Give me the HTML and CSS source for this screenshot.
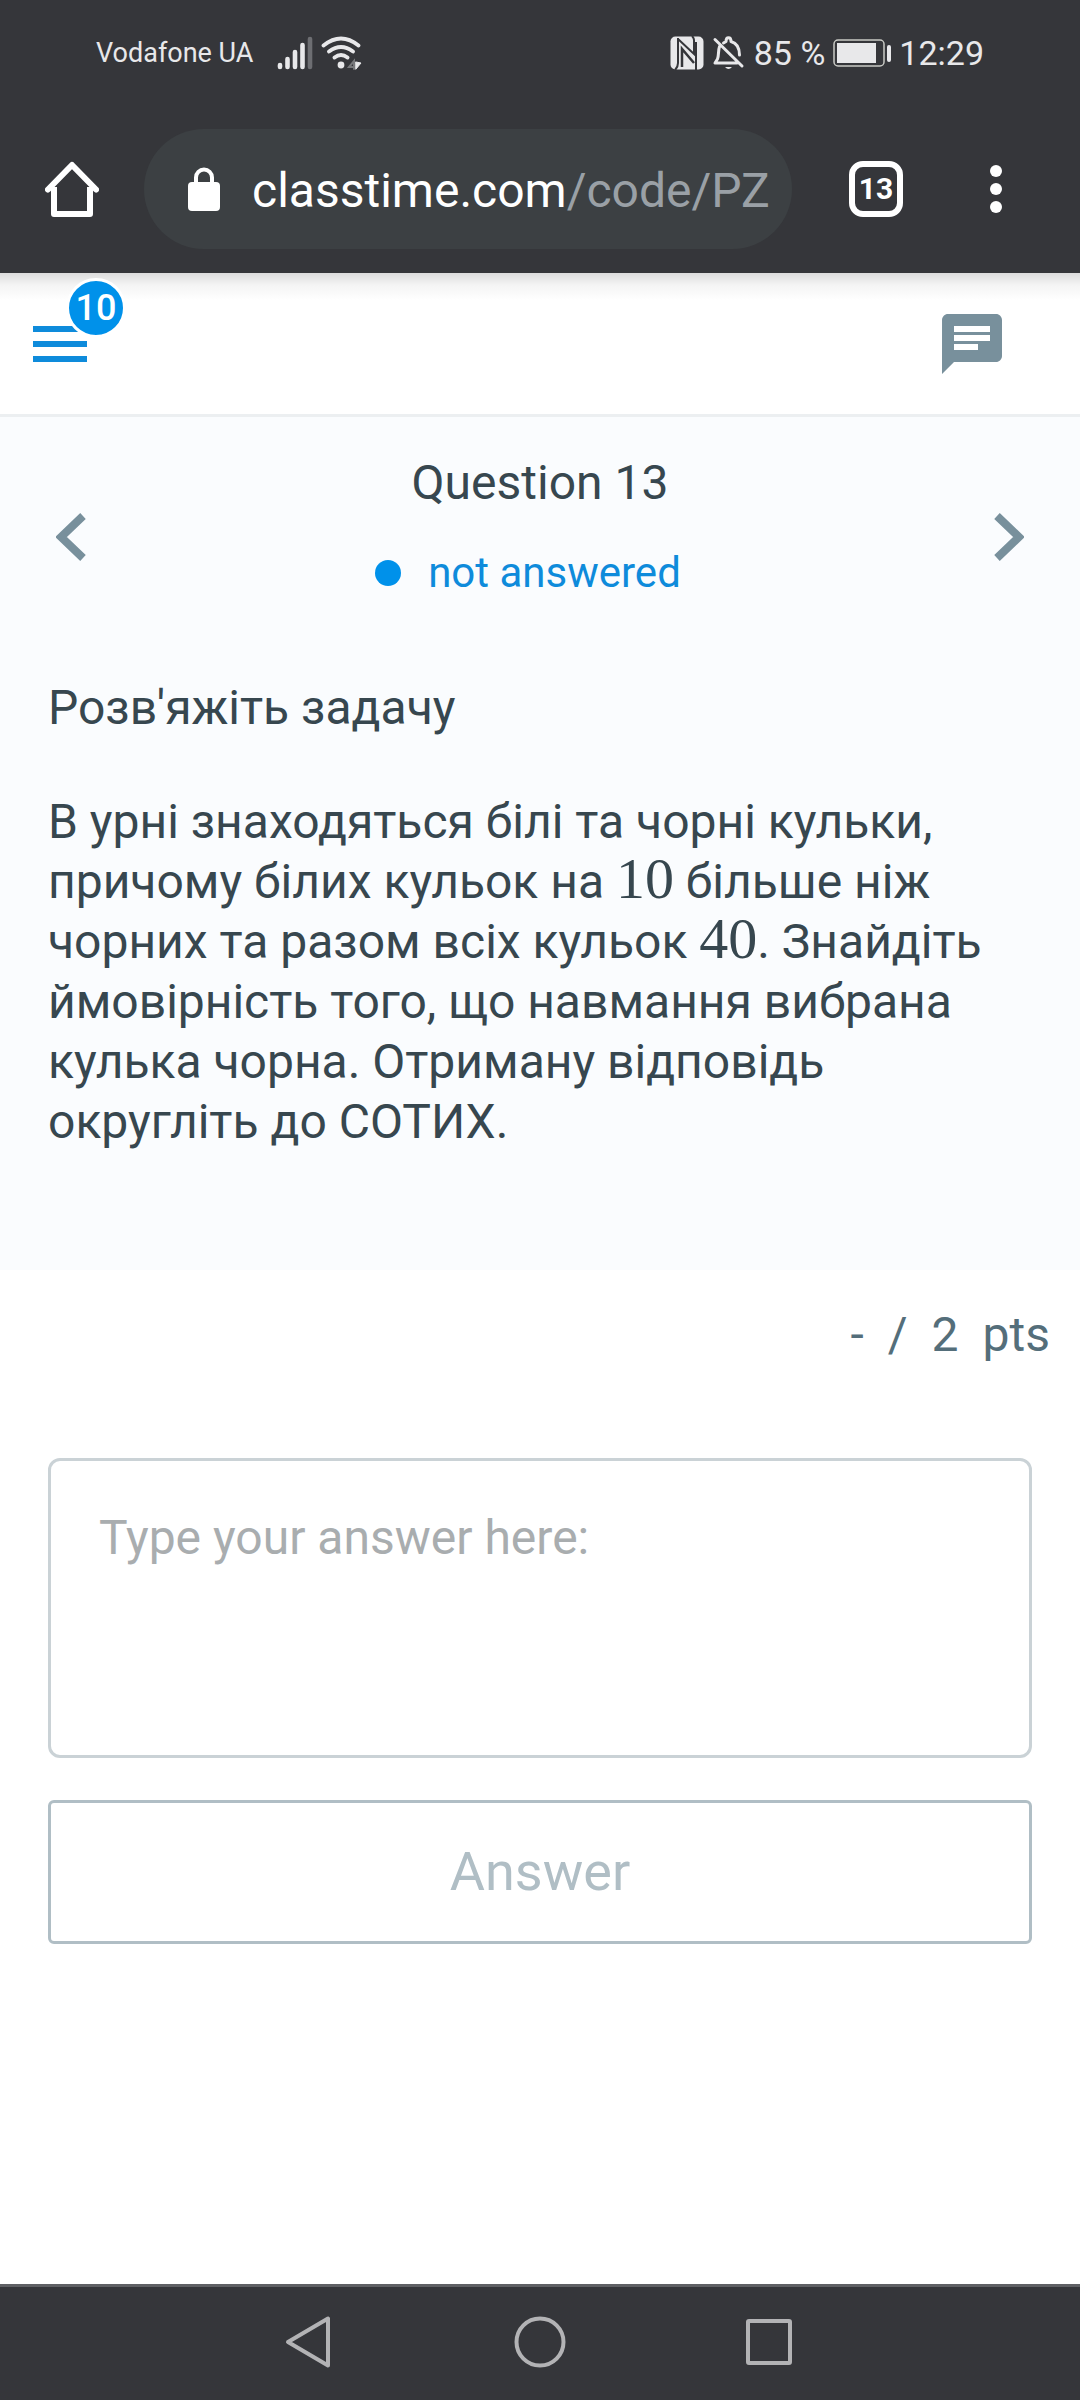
FILE: index.html
```html
<!DOCTYPE html>
<html lang="uk">
<head>
<meta charset="utf-8">
<meta name="viewport" content="width=device-width">
<title>Classtime – Question 13</title>
<link rel="stylesheet" href="styles.css">
</head>
<body>
<div class="screen">
  <div class="status-bar">
    <div class="status-group">
      <span class="carrier">Vodafone UA</span>
      <div class="radio-icons">
        <svg width="36" height="34" viewBox="0 0 36 34" stroke-width="4.6" stroke-linecap="round" stroke="#e8e8ea" aria-hidden="true">
          <path d="M3 29v2M10.500 23v8M18 16v15M25.500 9v22"/><path d="M33 3v28" stroke="#6d6e72"/>
        </svg>
        <svg width="42" height="34" viewBox="0 0 42 34" fill="none" stroke="#e8e8ea" stroke-width="3.800" stroke-linecap="round" aria-hidden="true">
          <path d="M2.500 9.500Q20 -4.500 37.500 9.500M8 15.500Q20 6.500 32 15.500M13.500 21.500Q20 16.500 26.500 21.500"/>
          <circle cx="20" cy="29" r="3.400" fill="#e8e8ea" stroke="none"/>
          <path d="M33 33V25l-5 6h6" stroke="#77787b" stroke-width="2"/>
          <path d="M35 26l5 1-5 6z" fill="#e8e8ea" stroke-width="1"/>
        </svg>
      </div>
    </div>
    <div class="status-group status-right">
      <svg width="34" height="34" viewBox="0 0 34 34" aria-hidden="true">
        <rect x="0.500" y="0.500" width="33" height="33" rx="5" fill="#e8e8ea"/>
        <path d="M8 2v25q0 4-3 7M8 3l16 15V4q0-2-2-4M26 34V6" fill="none" stroke="#35363a" stroke-width="2"/>
        <path d="M12 31V13l12 14" fill="none" stroke="#35363a" stroke-width="2.500"/>
      </svg>
      <svg width="34" height="34" viewBox="0 0 34 34" fill="none" stroke="#e8e8ea" stroke-width="3" stroke-linecap="round" stroke-linejoin="round" aria-hidden="true">
        <path d="M3 3.500l27 26.500M7.500 10.500c-1.500 4-.5 9-2 12.500L3 27h22M11.500 7l2.500-1.500c0-5 5-5 5 0 7 2 8.500 7 8.500 13.500"/>
        <path d="M13 31h7q-3.500 4-7 0z" fill="#e8e8ea" stroke="none"/>
      </svg>
      <span class="battery-level">85 %</span>
      <svg width="58" height="30" viewBox="0 0 58 30" aria-hidden="true">
        <rect x="1" y="2" width="50" height="26" rx="4" fill="none" stroke="#c9cac5" stroke-width="1.500"/>
        <rect x="4" y="5" width="39" height="20" fill="#e8e8ea"/>
        <rect x="54" y="7" width="4" height="17" rx="2" fill="#e8e8ea"/>
      </svg>
      <span class="clock">12:29</span>
    </div>
  </div>

  <div class="browser-bar">
    <button class="bar-button home-button" type="button" aria-label="Home">
      <svg width="54" height="56" viewBox="0 0 54 56" fill="none" stroke="#fff" stroke-width="6" stroke-linecap="round" stroke-linejoin="round">
        <path d="M3 28.500L27 4l24 24.500"/><path d="M9 26v27h36V26" stroke-linecap="butt"/>
      </svg>
    </button>
    <button class="address" type="button" aria-label="Address">
      <svg width="32" height="44" viewBox="0 0 32 44">
        <rect x="0" y="15" width="32" height="29" rx="4" fill="#fff"/>
        <path d="M8 17V10.500a8 8 0 0 1 16 0V17" fill="none" stroke="#fff" stroke-width="4"/>
      </svg>
      <span class="url">classtime.com<span class="url-path">/code/PZ</span></span>
    </button>
    <button class="bar-button" type="button" aria-label="Tabs"><span class="tab-count">13</span></button>
    <button class="bar-button" type="button" aria-label="More">
      <svg width="12" height="48" viewBox="0 0 12 48" fill="#fff"><circle cx="6" cy="6" r="6"/><circle cx="6" cy="24" r="6"/><circle cx="6" cy="42" r="6"/></svg>
    </button>
  </div>

  <header class="app-header">
    <button class="menu-button" type="button" aria-label="Menu">
      <svg width="54" height="36" viewBox="0 0 54 36" fill="#0e8bdb"><path d="M0 0h54v6H0zM0 15h54v6H0zM0 30h54v6H0z"/></svg>
      <span class="badge">10</span>
    </button>
    <button class="chat-button" type="button" aria-label="Messages">
      <svg width="72" height="72" viewBox="0 0 24 24" fill="#78909c"><path d="M20 2H4c-1.100 0-1.990.9-1.990 2L2 22l4-4h14c1.100 0 2-.9 2-2V4c0-1.100-.9-2-2-2zM6 6h12v2H6V6zm8 8H6v-2h8v2zm4-3H6V9h12v2z"/></svg>
    </button>
  </header>

  <main class="content">
    <section class="question">
      <div class="question-nav">
        <button class="step" type="button" aria-label="Previous question">
          <svg width="30" height="48" viewBox="0 0 30 48" fill="none" stroke="#78909c" stroke-width="8"><path d="M27 3L5 24l22 21"/></svg>
        </button>
        <div class="question-title">
          <h1>Question 13</h1>
          <p class="state"><span class="dot"></span>not answered</p>
        </div>
        <button class="step" type="button" aria-label="Next question">
          <svg width="30" height="48" viewBox="0 0 30 48" fill="none" stroke="#78909c" stroke-width="8"><path d="M3 3l22 21L3 45"/></svg>
        </button>
      </div>
      <div class="task">
        <h2>Розв'яжіть задачу</h2>
        <p>В урні знаходяться білі та чорні кульки, причому білих кульок на <span class="math">10</span> більше ніж чорних та разом всіх кульок <span class="math">40</span>. Знайдіть ймовірність того, що навмання вибрана кулька чорна. Отриману відповідь округліть до СОТИХ.</p>
      </div>
    </section>
    <p class="points"><span>-</span><span>/</span><span>2</span><span>pts</span></p>
    <form class="answer-form">
      <textarea class="answer-input" aria-label="Answer text" placeholder="Type your answer here:"></textarea>
      <button class="answer-button" type="button">Answer</button>
    </form>
  </main>

  <nav class="system-nav">
    <button type="button" aria-label="Back"><svg width="54" height="54" viewBox="0 0 54 54"><path d="M4 27L44 3.500v47z"/></svg></button>
    <button type="button" aria-label="Home screen"><svg width="54" height="54" viewBox="0 0 54 54"><circle cx="27" cy="27" r="23.500"/></svg></button>
    <button type="button" aria-label="Recent apps"><svg width="54" height="54" viewBox="0 0 54 54"><rect x="6" y="6" width="42" height="42" rx="1"/></svg></button>
  </nav>
</div>
</body>
</html>
```
FILE: styles.css
```css
* { box-sizing: border-box; }
body, h1, h2, p { margin: 0; }
body {
  font-family: Roboto, "Liberation Sans", sans-serif;
  font-size: 48px;
  line-height: 60px;
  color: #37474f;
  background: #fff;
}
h1, h2 { font-size: 48px; font-weight: 400; }
button {
  padding: 0;
  border: 0;
  background: none;
  font: inherit;
  color: inherit;
}
svg { display: block; flex: none; }

.screen {
  display: flex;
  flex-direction: column;
  min-height: 100vh;
}

/* Phone status bar */
.status-bar {
  display: flex;
  justify-content: space-between;
  align-items: center;
  height: 105px;
  padding: 0 96px;
  background: #35363a;
  color: #e8e8ea;
  font-size: 34px;
}
.status-group { display: flex; align-items: center; gap: 24px; }
.status-right { gap: 8px; }
.carrier { font-size: 27px; }
.radio-icons { display: flex; gap: 8px; }

/* Browser toolbar */
.browser-bar {
  display: flex;
  align-items: center;
  height: 168px;
  padding-right: 24px;
  background: #35363a;
  color: #fff;
}
.bar-button {
  display: flex;
  justify-content: center;
  align-items: center;
  width: 120px;
  height: 120px;
}
.home-button { width: 144px; }
.address {
  display: flex;
  flex: 1;
  align-items: center;
  gap: 32px;
  min-width: 0;
  height: 120px;
  margin-right: 24px;
  padding: 0 16px 0 44px;
  border-radius: 60px;
  background: #3c4043;
}
.url { padding-top: 3px; white-space: nowrap; }
.url-path { color: #9aa0a6; }
.tab-count {
  width: 54px;
  height: 56px;
  border: 6px solid #fff;
  border-radius: 14px;
  font-size: 30px;
  font-weight: 700;
  line-height: 44px;
  text-align: center;
}

/* App header */
.app-header {
  display: flex;
  justify-content: space-between;
  align-items: center;
  height: 144px;
  padding: 0 72px 0 33px;
  border-bottom: 3px solid #eceff1;
  background: linear-gradient(#dcdcdc, #f4f4f4 12px, #fff 27px);
}
.menu-button { position: relative; }
.badge {
  position: absolute;
  left: 33px;
  bottom: 24px;
  width: 60px;
  height: 60px;
  border: 3px solid #fff;
  border-radius: 50%;
  background: #0091ea;
  color: #fff;
  font-size: 36px;
  font-weight: 500;
  line-height: 54px;
}

/* Question */
.content { flex: 1; }
.question {
  padding: 36px 48px 118px;
  background: #fafcfe;
}
.question-nav {
  display: flex;
  justify-content: space-between;
  align-items: center;
  padding: 0 8px;
}
.question-title {
  display: flex;
  flex-direction: column;
  align-items: center;
  gap: 30px;
  padding-bottom: 18px;
}
.state {
  display: flex;
  align-items: center;
  gap: 27px;
  padding-right: 24px;
  color: #0e8bdb;
  font-size: 42px;
}
.dot {
  width: 26px;
  height: 26px;
  border-radius: 50%;
  background: #0091ea;
}
.task {
  display: flex;
  flex-direction: column;
  gap: 54px;
  padding-top: 57px;
}
.math {
  font-family: "Liberation Serif", serif;
  font-size: 58px;
  line-height: 48px;
}

/* Answer */
.points {
  display: flex;
  justify-content: flex-end;
  gap: 24px;
  padding: 35px 30px 0;
  color: #546e7a;
}
.answer-form {
  display: flex;
  flex-direction: column;
  gap: 42px;
  padding: 93px 48px 48px;
}
.answer-input {
  display: block;
  height: 300px;
  padding: 47px 48px;
  border: 3px solid #cad2d6;
  border-radius: 12px;
  background: #fff;
  color: #37474f;
  font: inherit;
  resize: none;
}
.answer-input::placeholder { color: #a9adaf; opacity: 1; }
.answer-button {
  height: 144px;
  border: 3px solid #b0bec5;
  border-radius: 6px;
  color: #b0bec5;
  font-size: 54px;
}

/* System navigation */
.system-nav {
  display: flex;
  justify-content: center;
  gap: 175px;
  height: 116px;
  padding-bottom: 3px;
  border-top: 3px solid #5f6064;
  background: #35363a;
}
.system-nav svg {
  fill: none;
  stroke: #b3b3b5;
  stroke-width: 4;
  stroke-linejoin: round;
}
```
